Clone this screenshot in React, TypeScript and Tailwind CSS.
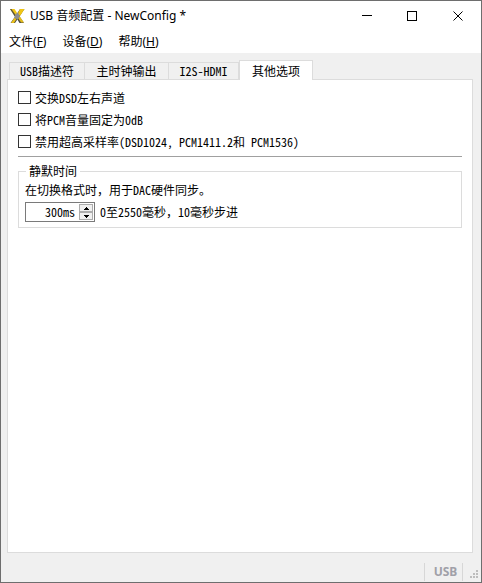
import { useState } from 'react';

const UI_FONT = "font-['Noto_Sans','Noto_Sans_CJK_SC',sans-serif]";
const FORM_FONT = "font-['Noto_Sans_Mono_CJK_SC','Noto_Sans_CJK_SC',monospace]";

const menus = [
  { label: '文件', accessKey: 'F' },
  { label: '设备', accessKey: 'D' },
  { label: '帮助', accessKey: 'H' }
];

const tabs = [
  { id: 'usb', label: 'USB描述符', width: 'w-[76px]' },
  { id: 'clock', label: '主时钟输出', width: 'w-[84px]' },
  { id: 'i2s', label: 'I2S-HDMI', width: 'w-[70px]' },
  { id: 'other', label: '其他选项', width: 'w-[74px]' }
];

const options = [
  '交换DSD左右声道',
  '将PCM音量固定为0dB',
  '禁用超高采样率(DSD1024, PCM1411.2和 PCM1536)'
];

const AppIcon = () => (
  <svg width="16" height="16" viewBox="0 0 16 16" aria-hidden="true">
    <path d="M11 1h4.500L6 15H1.500L6.500 8z" fill="#4b4a43" />
    <path d="M11 1H15.500L11 8 8.500 6z" fill="#f0c514" />
    <path d="M1 1h4.500l3 4.500L6.500 8z" fill="#f0c514" />
    <path d="M1 1h1.500L7 7.500 6 9z" fill="#5c5538" />
    <path d="M9.500 7l5.500 8h-4.500L7.500 10z" fill="#4b4a43" />
    <path d="M10.500 8l4.500 6.500h-3L9 10z" fill="#e3bb1c" />
    <path d="M5.500 9.500L7.500 11 5 15H2z" fill="#e9c01a" />
    <path d="M6.500 6l2.500-1.500 2 4L8.500 11.500 5.500 10z" fill="#8c8d92" />
  </svg>
);

const TitleBar = () => (
  <header className="flex h-[30px] items-center pl-2">
    <AppIcon />
    <h1 className="ml-[5px] flex-1 text-[12px] leading-4">USB 音频配置 - NewConfig *</h1>
    <button aria-label="最小化" className="flex h-full w-[46px] items-center justify-center">
      <svg width="11" height="11" viewBox="0 0 11 11" shapeRendering="crispEdges">
        <path d="M0 4.500h10" stroke="#000" />
      </svg>
    </button>
    <button aria-label="最大化" className="flex h-full w-[45px] items-center justify-center">
      <svg width="11" height="11" viewBox="0 0 11 11" fill="none" shapeRendering="crispEdges">
        <path d="M.5.5h9v9h-9z" stroke="#000" />
      </svg>
    </button>
    <button aria-label="关闭" className="flex h-full w-[46px] items-center justify-center">
      <svg width="11" height="11" viewBox="0 0 11 11">
        <path d="M.5.5l9 9M9.500.5l-9 9" stroke="#000" />
      </svg>
    </button>
  </header>
);

const MenuBar = () => (
  <nav className="flex h-[22px] items-center gap-4 pl-2">
    {menus.map((menu) => (
      <button key={menu.accessKey} className="text-[12px] leading-4">
        {menu.label}(<u>{menu.accessKey}</u>)
      </button>
    ))}
  </nav>
);

const MuteTime = () => {
  const [value, setValue] = useState(300);

  const step = (delta: number) => {
    setValue(Math.min(2550, Math.max(0, value + delta)));
  };

  return (
    <fieldset className="mt-1 border border-[#dcdcdc] px-[6px] pb-[5px]">
      <legend className="ml-px px-[3px] leading-5">静默时间</legend>
      <p className="leading-[18px]">在切换格式时，用于DAC硬件同步。</p>
      <div className="mt-[3px] flex items-center gap-[5px]">
        <div className="flex h-5 w-[70px] border border-[#7a7a7a] bg-white p-px">
          <input
            id="mute-time"
            type="text"
            value={`${value}ms`}
            onChange={(e) => setValue(parseInt(e.target.value, 10) || 0)}
            className="min-w-0 flex-1 pr-[4px] text-right leading-4 outline-none"
          />
          <div className="flex w-[14px] flex-col">
            <button
              aria-label="增加"
              onClick={() => step(10)}
              className="flex flex-1 items-center justify-center border border-[#acacac] bg-[#f0f0f0]"
            >
              <svg width="5" height="3" viewBox="0 0 5 3" shapeRendering="crispEdges">
                <path d="M2 0h1v1h1v1h1v1H0V2h1V1h1z" />
              </svg>
            </button>
            <button
              aria-label="减少"
              onClick={() => step(-10)}
              className="flex flex-1 items-center justify-center border border-[#acacac] bg-[#f0f0f0]"
            >
              <svg width="5" height="3" viewBox="0 0 5 3" shapeRendering="crispEdges">
                <path d="M0 0h5v1H4v1H3v1H2V2H1V1H0z" />
              </svg>
            </button>
          </div>
        </div>
        <label htmlFor="mute-time">0至2550毫秒，10毫秒步进</label>
      </div>
    </fieldset>
  );
};

const OtherOptions = () => (
  <section className="flex flex-1 flex-col border border-[#dcdcdc] bg-white px-[10px] pt-[7px]">
    {options.map((option) => (
      <label key={option} className="flex h-[22px] items-center gap-1">
        <input
          type="checkbox"
          className="mb-px size-[13px] shrink-0 appearance-none border border-[#333] bg-white checked:bg-[#333]"
        />
        {option}
      </label>
    ))}
    <hr className="mt-[3px] border-[#a0a0a0]" />
    <MuteTime />
  </section>
);

export default function App() {
  const [activeTab, setActiveTab] = useState('other');

  return (
    <div className={`flex min-h-screen flex-col border border-[#6e6e6e] bg-white text-black ${UI_FONT}`}>
      <TitleBar />
      <MenuBar />

      <main className={`flex flex-1 flex-col bg-[#f0f0f0] pt-[7px] pr-2 pl-[6px] text-[12px] leading-4 ${FORM_FONT}`}>
        {/* 选项卡 */}
        <div role="tablist" className="-mb-px flex items-end pl-[2px]">
          {tabs.map((tab) => (
            <button
              key={tab.id}
              role="tab"
              aria-selected={activeTab === tab.id}
              onClick={() => setActiveTab(tab.id)}
              className={`${tab.width} border border-[#dcdcdc] ${
                activeTab === tab.id ? 'z-10 h-5 border-b-0 bg-white' : 'h-[18px] bg-[#f0f0f0] not-first:border-l-0'
              }`}
            >
              {tab.label}
            </button>
          ))}
        </div>
        <OtherOptions />
      </main>

      {/* 状态栏 */}
      <footer className="flex h-[29px] items-center justify-end bg-[#f0f0f0] pt-2">
        <span className="flex h-[18px] w-[39px] items-center justify-center border-x border-[#d7d7d7] pl-1 text-[12px] font-bold text-[#a0a0a8]">
          USB
        </span>
        <svg width="8" height="8" viewBox="0 0 8 8" fill="#bdbdbd" className="mt-1 mr-[3px] ml-[7px]" aria-hidden="true">
          <path d="M6 0h2v2H6zM3 3h2v2H3zM6 3h2v2H6zM0 6h2v2H0zM3 6h2v2H3zM6 6h2v2H6z" />
        </svg>
      </footer>
    </div>
  );
}
